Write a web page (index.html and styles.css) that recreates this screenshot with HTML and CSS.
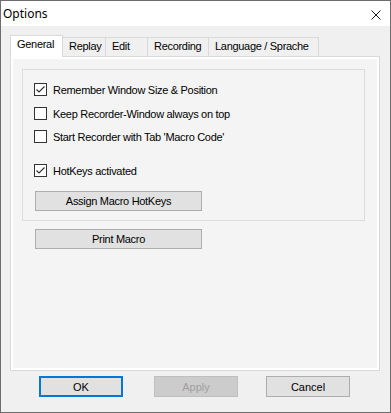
FILE: index.html
```html
<!DOCTYPE html>
<html>
<head>
<meta charset="utf-8">
<link rel="stylesheet" href="styles.css">
</head>
<body>
<div class="window">
  <div class="titlebar">
    <span class="title">Options</span>
    <svg class="close" width="10" height="10" viewBox="0 0 10 10"><path d="M0.5 0.5L9.5 9.5M9.5 0.5L0.5 9.5" stroke="#1a1a1a" stroke-width="1" fill="none"/></svg>
  </div>
  <div class="client">
    <div class="tabs">
      <div class="tab active t-general">General</div>
      <div class="tab t-replay">Replay</div>
      <div class="tab t-edit">Edit</div>
      <div class="tab t-recording">Recording</div>
      <div class="tab t-language">Language / Sprache</div>
    </div>
    <div class="panel">
      <div class="page">
        <div class="group">
          <div class="check r1"><span class="box checked"><svg width="13" height="13" viewBox="0 0 13 13"><rect x="0.5" y="0.5" width="12" height="12" fill="#fff" stroke="#333"/><polyline points="2.5,6.5 5,9 10.5,3.5" fill="none" stroke="#333" stroke-width="1.2"/></svg></span>Remember Window Size &amp; Position</div>
          <div class="check r2"><span class="box"><svg width="13" height="13" viewBox="0 0 13 13"><rect x="0.5" y="0.5" width="12" height="12" fill="#fff" stroke="#333"/></svg></span>Keep Recorder-Window always on top</div>
          <div class="check r3"><span class="box"><svg width="13" height="13" viewBox="0 0 13 13"><rect x="0.5" y="0.5" width="12" height="12" fill="#fff" stroke="#333"/></svg></span>Start Recorder with Tab 'Macro Code'</div>
          <div class="check r4"><span class="box checked"><svg width="13" height="13" viewBox="0 0 13 13"><rect x="0.5" y="0.5" width="12" height="12" fill="#fff" stroke="#333"/><polyline points="2.5,6.5 5,9 10.5,3.5" fill="none" stroke="#333" stroke-width="1.2"/></svg></span>HotKeys activated</div>
          <button class="btn wide assign">Assign Macro HotKeys</button>
        </div>
        <button class="btn wide print">Print Macro</button>
      </div>
    </div>
    <div class="actions">
      <button class="btn dlg ok">OK</button>
      <button class="btn dlg apply" disabled>Apply</button>
      <button class="btn dlg cancel">Cancel</button>
    </div>
  </div>
</div>
</body>
</html>
```
FILE: styles.css
```css
html, body {
  margin: 0;
  padding: 0;
  background: #f0f0f0;
}
.window {
  box-sizing: border-box;
  width: 391px;
  height: 413px;
  border: 1px solid #6d6d6d;
  background: #f0f0f0;
  display: flex;
  flex-direction: column;
  font-family: "Liberation Sans", Arial, sans-serif;
  font-size: 11px;
  letter-spacing: -0.3px;
  color: #000;
}
.titlebar {
  height: 25px;
  background: #fff;
  display: flex;
  align-items: center;
  padding-left: 2px;
  padding-right: 9px;
  justify-content: space-between;
}
.title {
  font-family: "Noto Sans", "Open Sans", sans-serif;
  font-size: 12px;
  letter-spacing: 0;
  color: #000;
  line-height: 16px;
  margin-top: 1px;
}
.close {
  display: block;
  margin-top: 3px;
}
.client {
  flex: 1;
  padding: 9px 0 0 9px;
  display: flex;
  flex-direction: column;
}
.tabs {
  display: flex;
  align-items: flex-end;
  height: 21px;
  position: relative;
  z-index: 1;
}
.tab {
  box-sizing: border-box;
  height: 19px;
  border: 1px solid #d9d9d9;
  border-bottom: none;
  margin-left: -1px;
  background: #f0f0f0;
  padding-left: 6px;
  line-height: 17px;
  white-space: nowrap;
}
.tab:first-child { margin-left: 0; }
.tab.active {
  height: 22px;
  margin-bottom: -1px;
  background: #fff;
  line-height: 17px;
  position: relative;
  z-index: 2;
}
.t-general { width: 53px; }
.t-replay { width: 44px; }
.t-edit { width: 43px; }
.t-recording { width: 62px; }
.t-language { width: 111px; }
.panel {
  box-sizing: border-box;
  width: 370px;
  height: 315px;
  border: 1px solid #d9d9d9;
  background: #fff;
  padding: 2px;
}
.page {
  height: 100%;
  background: #f4f4f4;
  padding: 10px 0 0 9px;
  box-sizing: border-box;
}
.group {
  box-sizing: border-box;
  width: 343px;
  height: 152px;
  border: 1px solid #dcdcdc;
  padding: 13px 0 0 11px;
  display: flex;
  flex-direction: column;
  align-items: flex-start;
}
.check {
  display: flex;
  align-items: center;
  height: 13px;
  white-space: nowrap;
}
.box {
  display: block;
  width: 13px;
  height: 13px;
  margin-right: 6px;
}
.box svg { display: block; }
.r2 { margin-top: 11px; }
.r3 { margin-top: 10px; }
.r4 { margin-top: 21px; }
.btn {
  box-sizing: border-box;
  font-family: "Liberation Sans", Arial, sans-serif;
  font-size: 11px;
  letter-spacing: -0.3px;
  color: #000;
  background: #e1e1e1;
  border: 1px solid #adadad;
  padding: 0;
  margin: 0;
  display: block;
}
.wide {
  width: 167px;
  height: 20px;
}
.assign {
  margin-top: 14px;
  margin-left: 1px;
}
.print {
  margin-top: 8px;
  margin-left: 13px;
}
.actions {
  display: flex;
  margin-top: 5px;
}
.dlg {
  width: 84px;
  height: 21px;
  letter-spacing: 0;
}
.ok {
  margin-left: 29px;
  border: 2px solid #0078d7;
}
.apply {
  margin-left: 31px;
  background: #cccccc;
  border-color: #bfbfbf;
  color: #a0a0a0;
}
.cancel {
  margin-left: 28px;
}
```
